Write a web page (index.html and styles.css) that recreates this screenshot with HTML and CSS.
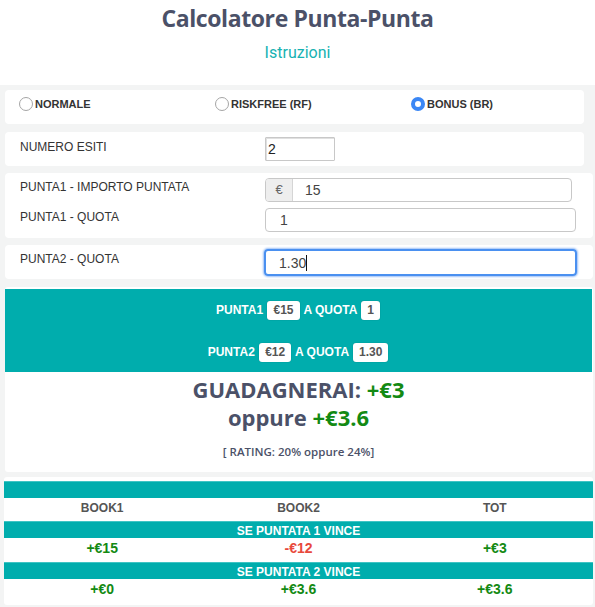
FILE: index.html
```html
<!DOCTYPE html>
<html lang="it">
<head>
<meta charset="utf-8">
<title>Calcolatore Punta-Punta</title>
<link rel="stylesheet" href="styles.css">
</head>
<body>
<header class="head">
  <h1 class="title">Calcolatore Punta-Punta</h1>
  <a class="instr">Istruzioni</a>
</header>
<main class="main">
  <section class="card narrow radios">
    <div class="radio"><span class="dot"></span>NORMALE</div>
    <div class="radio"><span class="dot"></span>RISKFREE (RF)</div>
    <div class="radio"><span class="dot on"></span>BONUS (BR)</div>
  </section>

  <section class="card narrow form one">
    <div class="lbl">NUMERO ESITI</div>
    <div class="inp small">2</div>
  </section>

  <section class="card form two">
    <div class="lbl">PUNTA1 - IMPORTO PUNTATA</div>
    <div class="group">
      <span class="addon">€</span>
      <span class="grp-inp">15</span>
    </div>
    <div class="lbl">PUNTA1 - QUOTA</div>
    <div class="inp wide">1</div>
  </section>

  <section class="card form one last">
    <div class="lbl">PUNTA2 - QUOTA</div>
    <div class="inp wide focus">1.30<span class="caret"></span></div>
  </section>

  <section class="card result">
    <div class="band">
      <div class="bline">PUNTA1 <span class="badge">€15</span> A QUOTA <span class="badge">1</span></div>
      <div class="bline">PUNTA2 <span class="badge">€12</span> A QUOTA <span class="badge">1.30</span></div>
    </div>
    <div class="gain first">GUADAGNERAI: <span class="pos">+€3</span></div>
    <div class="gain">oppure <span class="pos">+€3.6</span></div>
    <div class="rating">[ RATING: 20% oppure 24%]</div>
  </section>

  <section class="card table">
    <div class="tband"></div>
    <div class="trow heads"><span>BOOK1</span><span>BOOK2</span><span>TOT</span></div>
    <div class="tband">SE PUNTATA 1 VINCE</div>
    <div class="trow vals"><span class="pos">+€15</span><span class="neg">-€12</span><span class="pos">+€3</span></div>
    <div class="tband">SE PUNTATA 2 VINCE</div>
    <div class="trow vals"><span class="pos">+€0</span><span class="pos">+€3.6</span><span class="pos">+€3.6</span></div>
  </section>
</main>
</body>
</html>
```

FILE: styles.css
```css
* { box-sizing: border-box; }
html, body { margin: 0; padding: 0; }
body {
  background: #f3f4f4;
  font-family: "Liberation Sans", Arial, sans-serif;
  color: #333;
}
.head {
  background: #fff;
  height: 85px;
  text-align: center;
  padding-top: 2px;
}
.title {
  margin: 0;
  font-family: "Open Sans", sans-serif;
  font-weight: 700;
  font-size: 23px;
  letter-spacing: -0.4px;
  line-height: 32px;
  color: #4b5168;
}
.instr {
  display: block;
  margin-top: 8px;
  font-family: Roboto, sans-serif;
  font-size: 16px;
  line-height: 22px;
  color: #17b2b2;
}
.main {
  padding: 5px 2px 4px 5px;
  display: flex;
  flex-direction: column;
  gap: 8px;
}
.card {
  background: #fff;
  border-radius: 4px;
}
.narrow { margin-right: 9px; }
.radios {
  display: grid;
  grid-template-columns: 196px 196px 196px;
  padding: 7px 0 13px 14px;
  height: 34px;
}
.radio {
  display: flex;
  align-items: center;
  font-size: 11px;
  font-weight: 700;
  color: #333;
  line-height: 14px;
}
.dot {
  width: 14px;
  height: 14px;
  border-radius: 50%;
  border: 1px solid #a5a5a5;
  background: #fff;
  margin-right: 2px;
}
.dot.on {
  border: 4px solid #3b87f5;
  background: #fff;
}
.form {
  display: grid;
  grid-template-columns: 245px 1fr;
  align-items: start;
  align-content: start;
  padding-left: 15px;
}
.form.one { height: 34px; padding-top: 5px; }
.form.two { margin-top: -1px; height: 65px; padding-top: 5px; row-gap: 6px; }
.form.last { margin-top: -1px; padding-top: 4px; }
.lbl {
  font-size: 12px;
  line-height: 14px;
  padding-top: 3px;
  color: #333;
}
.form.two .lbl { padding-top: 2px; }
.form.last .lbl { padding-top: 3px; }
.inp {
  height: 24px;
  border: 1px solid #c8c8c8;
  font-size: 14px;
  line-height: 22px;
  color: #222;
}
.inp.small {
  width: 70px;
  padding-left: 2px;
  border-radius: 1px;
  box-shadow: inset 1px 1px 0 #e0e0e0;
}
.inp.wide {
  width: 311px;
  border-radius: 4px;
  padding-left: 14px;
  color: #444;
}
.inp.focus {
  height: 27px;
  line-height: 24px;
  margin-left: -1px;
  width: 313px;
  border: 2px solid #4a90f0;
  box-shadow: 0 0 2px 1px #9cc0f7;
  padding-left: 13px;
}
.caret {
  display: inline-block;
  width: 1px;
  height: 16px;
  background: #111;
  vertical-align: -3px;
}
.group {
  display: flex;
  width: 307px;
  height: 24px;
  border: 1px solid #c8c8c8;
  border-radius: 4px;
  overflow: hidden;
}
.addon {
  width: 27px;
  background: #eeeeee;
  border-right: 1px solid #d5d5d5;
  font-size: 13px;
  color: #666;
  text-align: center;
  line-height: 22px;
}
.grp-inp {
  padding-left: 12px;
  font-size: 14px;
  line-height: 22px;
  color: #444;
}
.result {
  padding: 2px 1px 13px 0;
  text-align: center;
  border-radius: 3px;
}
.band {
  background: #00adad;
  height: 83px;
  padding-top: 11px;
  display: flex;
  flex-direction: column;
  gap: 22px;
}
.bline {
  color: #fff;
  font-weight: 700;
  font-size: 12px;
  line-height: 20px;
}
.badge {
  display: inline-block;
  background: #fff;
  color: #555;
  border-radius: 3px;
  padding: 0 6px;
  line-height: 19px;
  margin: 0 1px;
  box-shadow: 0 0 1px rgba(0,0,0,0.35);
}
.gain {
  font-family: "Open Sans", sans-serif;
  font-weight: 700;
  font-size: 22px;
  line-height: 28px;
  color: #4b5168;
}
.gain.first { margin-top: 3px; }
.pos { color: #138a13; }
.neg { color: #e8493c; }
.rating {
  margin-top: 14px;
  font-family: "Open Sans", sans-serif;
  font-weight: 600;
  font-size: 11.5px;
  line-height: 14px;
  color: #4b5168;
}
.table {
  margin-top: -3px;
  margin-left: -1px;
  padding: 4px 0 2px;
  border-radius: 3px;
}
.tband {
  background: #00adad;
  height: 17px;
  color: #fff;
  font-weight: 700;
  font-size: 12px;
  line-height: 18px;
  text-align: center;
  border-top: 1px solid #3fc4c4;
}
.trow {
  display: grid;
  grid-template-columns: 1fr 1fr 1fr;
  text-align: center;
}
.heads {
  height: 23px;
  line-height: 20px;
  font-size: 12px;
  font-weight: 700;
  color: #555;
}
.vals {
  height: 24px;
  line-height: 20px;
  font-size: 14px;
  font-weight: 700;
}
```
